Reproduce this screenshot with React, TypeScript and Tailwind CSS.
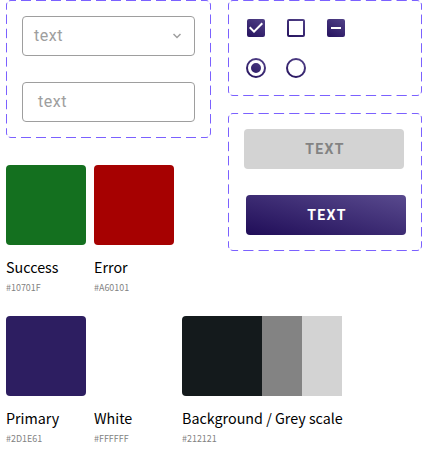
import type { ReactNode } from "react";

const RADIUS = 4.5;

// Dashes are spread evenly over a segment, with half a dash at each end.
function Dashed({ d, length }: { d: string; length: number }) {
  const period = length / Math.max(1, Math.round(length / 15));
  const dash = (period * 2) / 3;
  return <path d={d} strokeDasharray={`${dash} ${period - dash}`} strokeDashoffset={dash / 2} />;
}

function Side({ length, transform }: { length: number; transform: string }) {
  return (
    <g transform={transform}>
      <Dashed d={`M0 ${RADIUS}A${RADIUS} ${RADIUS} 0 0 1 ${RADIUS} 0`} length={(RADIUS * Math.PI) / 2} />
      <Dashed d={`M${RADIUS} 0H${length - RADIUS}`} length={length - 2 * RADIUS} />
    </g>
  );
}

function Frame({ w, h, className, children }: { w: number; h: number; className: string; children: ReactNode }) {
  return (
    <section className={`relative ${className}`}>
      <svg className="pointer-events-none absolute inset-0" width={w} height={h} fill="none" stroke="#7B61FF">
        <Side length={w - 1} transform="translate(.5 .5)" />
        <Side length={h - 1} transform={`translate(${w - 0.5} .5) rotate(90)`} />
        <Side length={w - 1} transform={`translate(${w - 0.5} ${h - 0.5}) rotate(180)`} />
        <Side length={h - 1} transform={`translate(.5 ${h - 0.5}) rotate(270)`} />
      </svg>
      {children}
    </section>
  );
}

const icons = {
  checked:
    "M19 3H5a2 2 0 0 0-2 2v14a2 2 0 0 0 2 2h14a2 2 0 0 0 2-2V5a2 2 0 0 0-2-2zM10 17l-5-5 1.41-1.41L10 14.17l7.59-7.59L19 8l-9 9z",
  unchecked:
    "M19 5v14H5V5h14m0-2H5a2 2 0 0 0-2 2v14a2 2 0 0 0 2 2h14a2 2 0 0 0 2-2V5a2 2 0 0 0-2-2z",
  mixed:
    "M19 3H5a2 2 0 0 0-2 2v14a2 2 0 0 0 2 2h14a2 2 0 0 0 2-2V5a2 2 0 0 0-2-2zM17 13H7v-2h10v2z",
  radioOn:
    "M12 7a5 5 0 1 0 0 10 5 5 0 0 0 0-10zM12 2a10 10 0 1 0 0 20 10 10 0 0 0 0-20zm0 18a8 8 0 1 1 0-16 8 8 0 0 1 0 16z",
  radioOff:
    "M12 2a10 10 0 1 0 0 20 10 10 0 0 0 0-20zm0 18a8 8 0 1 1 0-16 8 8 0 0 1 0 16z",
};

function Control({ name }: { name: keyof typeof icons }) {
  return (
    <svg width="24" height="24" viewBox="0 0 24 24" fillRule="evenodd">
      <defs>
        <linearGradient id={name} gradientUnits="userSpaceOnUse" x1="5" y1="24" x2="18" y2="0">
          <stop stopColor="#220F5B" />
          <stop offset="1" stopColor="#54448A" />
        </linearGradient>
      </defs>
      <path d={icons[name]} fill={`url(#${name})`} />
    </svg>
  );
}

function Swatch({ color, name, hex, className = "w-20" }: { color: ReactNode; name: string; hex: string; className?: string }) {
  return (
    <div className={`font-['Noto_Sans_CJK_SC',sans-serif] ${className}`}>
      {color}
      <div className="mt-2.5 h-6 whitespace-nowrap text-[14.32px] leading-6 text-black">{name}</div>
      <div className="mt-0.5 h-[13px] text-[8.95px] leading-[13px] text-[#828282]">{hex}</div>
    </div>
  );
}

export default function App() {
  return (
    <main className="h-[460px] w-[422px] overflow-hidden bg-white pl-1.5">
      <div className="flex h-[316px] gap-[17px]">
        <div className="w-[205px]">
          <Frame w={205} h={138} className="flex h-[138px] flex-col gap-[26px] p-4">
            <div className="flex h-10 items-center justify-between rounded border border-[#9E9E9E] pl-[11px] pr-[13px] font-[Roboto,sans-serif] text-base tracking-[0.5px] text-[#9E9E9E]">
              <span>text</span>
              <svg width="8" height="6" viewBox="0 0 8 6" fill="none" stroke="#9E9E9E" strokeWidth="1.5">
                <path d="M.5 1 4 4.5 7.5 1" />
              </svg>
            </div>
            <div className="flex h-10 items-center rounded border border-[#9E9E9E] pl-[15px] font-[Roboto,sans-serif] text-base tracking-[0.5px] text-[#9E9E9E]">
              text
            </div>
          </Frame>
          <div className="mt-[27px] flex gap-2">
            <Swatch color={<div className="h-20 rounded bg-[#14701F]" />} name="Success" hex="#10701F" />
            <Swatch color={<div className="h-20 rounded bg-[#A60101]" />} name="Error" hex="#A60101" />
          </div>
        </div>
        <div className="flex w-[194px] flex-col gap-[17px]">
          <Frame w={194} h={96} className="flex h-24 flex-col gap-4 p-4">
            <div className="flex gap-4">
              <Control name="checked" />
              <Control name="unchecked" />
              <Control name="mixed" />
            </div>
            <div className="flex gap-4">
              <Control name="radioOn" />
              <Control name="radioOff" />
            </div>
          </Frame>
          <Frame w={194} h={138} className="flex h-[138px] flex-col gap-[26px] p-4 font-[Roboto,sans-serif] text-sm font-bold tracking-[1.35px]">
            <button className="h-10 w-40 rounded bg-[#D3D3D3] pl-0.5 text-[#838383]">TEXT</button>
            <button className="ml-0.5 h-10 w-40 rounded bg-[linear-gradient(to_top_right,#200D58,#594A8E)] pl-0.5 text-white">TEXT</button>
          </Frame>
        </div>
      </div>
      <div className="flex gap-2">
        <Swatch color={<div className="h-20 rounded bg-[#2D1E61]" />} name="Primary" hex="#2D1E61" />
        <Swatch color={<div className="h-20 rounded bg-white" />} name="White" hex="#FFFFFF" />
        <Swatch
          className="w-40"
          color={
            <div className="flex h-20">
              <div className="w-20 rounded-l bg-[#141A1C]" />
              <div className="w-10 bg-[#838383]" />
              <div className="w-10 bg-[#D3D3D3]" />
            </div>
          }
          name="Background / Grey scale"
          hex="#212121"
        />
      </div>
    </main>
  );
}
